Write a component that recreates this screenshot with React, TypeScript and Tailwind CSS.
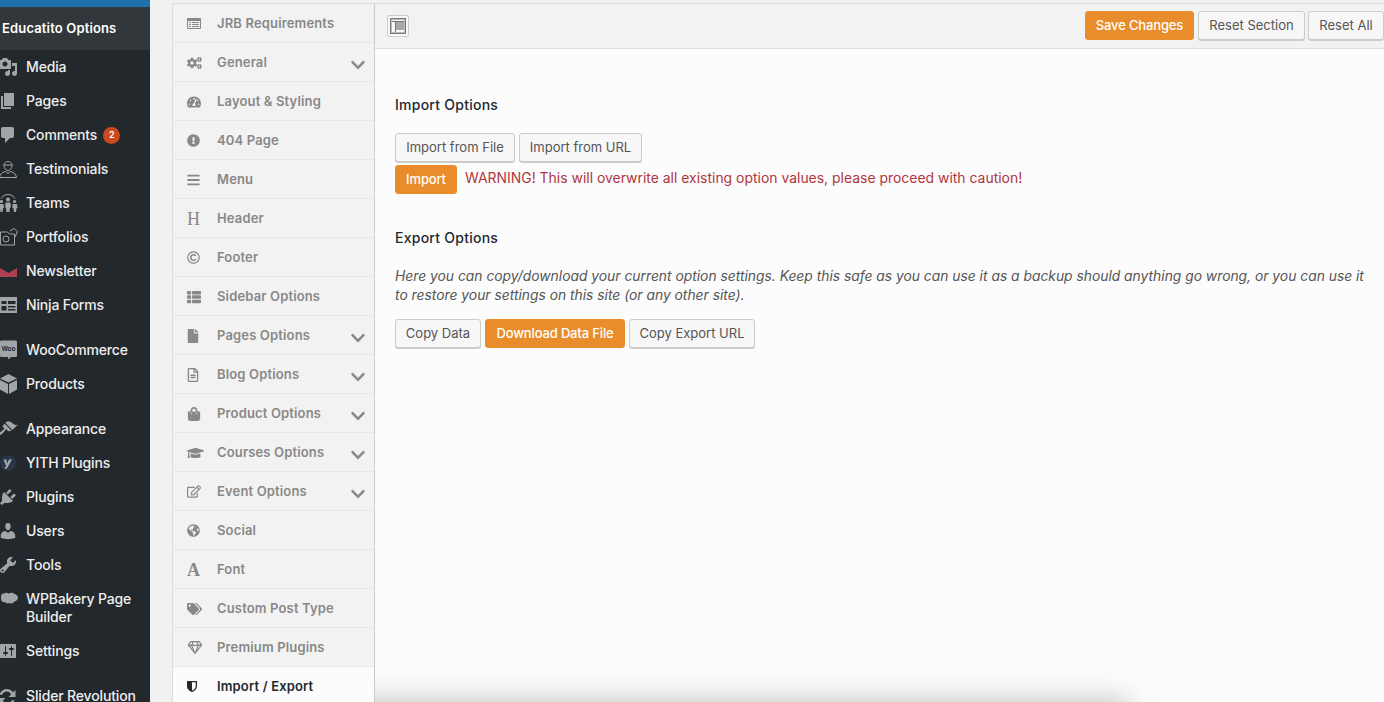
import type { ReactNode } from 'react'
import {
  FaBars,
  FaChevronDown,
  FaCogs,
  FaExclamationCircle,
  FaFile,
  FaGlobeAmericas,
  FaGraduationCap,
  FaRegCopyright,
  FaRegEdit,
  FaRegFileAlt,
  FaRegGem,
  FaShoppingBag,
  FaTachometerAlt,
  FaTags,
  FaThList,
} from 'react-icons/fa'

const font = 'font-["Inter","Liberation_Sans",sans-serif]'

const Dash = ({ d, className = '' }: { d: string; className?: string }) => (
  <svg viewBox="0 0 20 20" className={`h-5 w-5 fill-[#a0a5aa] ${className}`}>
    <path d={d} />
  </svg>
)

const Draw = ({ children }: { children: ReactNode }) => (
  <svg viewBox="0 0 20 20" className="h-5 w-5 fill-[#a0a5aa]">
    {children}
  </svg>
)

const outline = 'none'

const wpMenu: { label: string; icon: ReactNode; badge?: string; gap?: boolean; tall?: boolean }[] = [
  { label: 'Media', icon: <Dash d="M13 11V4c0-.55-.45-1-1-1h-1.67L9 1H5L3.67 3H2c-.55 0-1 .45-1 1v7c0 .55.45 1 1 1h10c.55 0 1-.45 1-1zM7 4.500c1.380 0 2.500 1.120 2.500 2.500S8.380 9.500 7 9.500 4.500 8.380 4.500 7 5.620 4.500 7 4.500zM14 6h5v10.500c0 1.380-1.120 2.500-2.500 2.500S14 17.880 14 16.500s1.120-2.500 2.500-2.500c.17 0 .34.02.5.05V9h-3V6zm-4 8.050V13h2v3.500c0 1.380-1.120 2.500-2.500 2.500S7 17.880 7 16.500 8.120 14 9.500 14c.17 0 .34.02.5.05z" /> },
  { label: 'Pages', icon: <Dash d="M6 15V2h10v13H6zm-1 1h8v2H3V5h2v11z" /> },
  { label: 'Comments', badge: '2', icon: <Dash d="M5 2h9c1.100 0 2 .9 2 2v7c0 1.100-.9 2-2 2h-2l-5 5v-5H5c-1.100 0-2-.9-2-2V4c0-1.100.9-2 2-2z" /> },
  {
    label: 'Testimonials',
    icon: (
      <Draw>
        <g fill={outline} stroke="#a0a5aa" strokeWidth="1">
          <path d="M6 6.500c0-2.500 1.800-4 4-4s4 1.500 4 4-1.800 5-4 5-4-2.500-4-5z" />
          <path d="M5.500 6h9M1.500 18.500c.5-3.500 2.800-5.500 6-6l2.500 2 2.500-2c3.200.5 5.500 2.500 6 6z" />
        </g>
      </Draw>
    ),
  },
  {
    label: 'Teams',
    icon: (
      <Draw>
        <circle cx="10" cy="6.500" r="2" />
        <circle cx="3.500" cy="8.500" r="1.600" />
        <circle cx="16.500" cy="8.500" r="1.600" />
        <path d="M7.500 9.500h5l.5 5h-1l-.5 4.500h-3L8 14.500H7zM1 11h4.500l.5 4-1 .5-.5 3.500h-2l-.5-3.500-1-.5zM14.500 11H19l.5 4-1 .5-.5 3.500h-2l-.5-3.500-1-.5z" />
        <path d="M3 5.500C4 2.500 7 1 10 1s6 1.500 7 4.500l-.7.3C15.300 3.200 12.800 2 10 2S4.700 3.200 3.700 5.800z" />
      </Draw>
    ),
  },
  {
    label: 'Portfolios',
    icon: (
      <Draw>
        <g fill={outline} stroke="#a0a5aa" strokeWidth="1">
          <path d="M2.500 5h7l2 2h5v11h-14z" />
          <circle cx="8" cy="12" r="3" />
          <path d="M12 4l4-2.500 3.500 3L17 10" />
        </g>
      </Draw>
    ),
  },
  {
    label: 'Newsletter',
    icon: (
      <svg viewBox="0 0 20 20" className="h-5 w-5 fill-[#b0404f]">
        <path d="M2 7l8.500 5L19 7v9H2z" />
      </svg>
    ),
  },
  {
    label: 'Ninja Forms',
    icon: (
      <svg viewBox="0 0 20 20" className="h-5 w-5 fill-[#a0a5aa]">
        <path d="M2 2h17v16H2zM3.500 6v3h5V6zm6.500 0v3h7.500V6zM3.500 11v4.500h5V11zm6.500 0v1.500h7.500V11zm0 3v1.500h7.500V14z" fillRule="evenodd" />
      </svg>
    ),
  },
  {
    label: 'WooCommerce',
    gap: true,
    icon: (
      <Draw>
        <path d="M3.500 0.500h14c1 0 1.500.6 1.500 1.500v13.500c0 1-.6 1.500-1.500 1.500H13l-2.500 2.500-.5-2.500H3.500C2.600 17 2 16.500 2 15.500V2C2 1 2.600.5 3.500.5z" />
        <text x="10.500" y="11" textAnchor="middle" fontSize="6.500" fontWeight="700" fill="#23282d" fontFamily="Liberation Sans">Woo</text>
      </Draw>
    ),
  },
  {
    label: 'Products',
    icon: (
      <Draw>
        <path d="M10.500 0l8.500 4.500-8.500 4-8.500-4zM2 6l8 4v10l-8-4.500zM19 6v9.500L11 20V10z" />
      </Draw>
    ),
  },
  { label: 'Appearance', gap: true, icon: <Dash d="M14.480 11.060L7.410 3.990l1.500-1.500c.5-.56 2.300-.47 3.510.32 1.210.8 1.430 1.280 2.910 2.100 1.180.64 2.450 1.260 4.450.85zm-.71.71L6.700 4.700 4.930 6.470c-.39.39-.39 1.020 0 1.410l1.060 1.060c.39.39.39 1.030 0 1.420-.6.6-1.430 1.110-2.210 1.690-.35.26-.7.53-1.010.84C1.430 13.230.4 14.910 1.200 15.700c.79.8 2.470-.23 3.830-1.590.31-.31.58-.66.84-1.010.58-.78 1.090-1.610 1.690-2.210.39-.39 1.020-.39 1.410 0l1.060 1.060c.39.39 1.020.39 1.410 0z" /> },
  {
    label: 'YITH Plugins',
    icon: (
      <svg viewBox="0 0 20 20" className="h-5 w-5">
        <circle cx="10" cy="10" r="8" fill="#2a3648" />
        <path d="M5.500 6.500h3l.5 4 2-4h3l-4.500 8c-.6 1.200-1.800 1.500-3 1.200l.4-1.700c.7.2 1.100 0 1.400-.6z" fill="#a0a5aa" />
      </svg>
    ),
  },
  { label: 'Plugins', icon: <Dash d="M13.110 4.360L9.870 7.600 8 5.730l3.240-3.240c.35-.34 1.050-.2 1.560.32.52.51.66 1.210.31 1.550zm-8 1.770l.91-1.120 9.010 9.010-1.190.84c-.71.71-2.630 1.160-3.820 1.160H6.140L4.900 17.260c-.59.59-1.540.59-2.120 0-.59-.58-.59-1.530 0-2.120l1.240-1.240v-3.880c0-1.130.4-3.190 1.090-3.890zm7.260 3.970l3.240-3.240c.34-.35 1.040-.21 1.550.31.52.51.66 1.210.31 1.550l-3.240 3.250z" /> },
  { label: 'Users', icon: <Dash d="M10 9.250c-2.270 0-2.730-3.440-2.730-3.440C7 4.020 7.820 2 9.970 2c2.160 0 2.980 2.020 2.710 3.810 0 0-.41 3.440-2.680 3.440zm0 2.570L12.720 10c2.390 0 4.520 2.330 4.520 4.530v2.490s-3.650 1.130-7.240 1.130c-3.650 0-7.240-1.130-7.240-1.130v-2.490c0-2.250 1.940-4.480 4.470-4.480z" /> },
  { label: 'Tools', icon: <Dash d="M16.680 9.770c-1.340 1.340-3.300 1.670-4.950.99l-5.410 6.520c-.99.99-2.590.99-3.580 0s-.99-2.590 0-3.570l6.520-5.420c-.68-1.650-.35-3.610.99-4.950 1.280-1.280 3.120-1.620 4.720-1.060l-2.890 2.890 2.820 2.820 2.860-2.870c.53 1.580.18 3.390-1.080 4.650zM3.810 16.210c.4.39 1.040.39 1.430 0 .4-.4.4-1.040 0-1.430-.39-.4-1.030-.4-1.430 0-.39.39-.39 1.030 0 1.430z" /> },
  {
    label: 'WPBakery Page Builder',
    tall: true,
    icon: (
      <Draw>
        <path d="M6 3.500c1.500-1 3.500-.8 4.500 0 2-1.200 4.500-1 6 .5 1 .2 3.500 1.500 3.500 3.500s-1.500 3.500-3.500 4c-1 1.500-3 2.500-5 1.500-1.500.8-3.500.3-4.500-.8-2.500.2-4-1-4-4.200S3.500 3.500 6 3.500z" />
      </Draw>
    ),
  },
  { label: 'Settings', icon: <Dash d="M18 16V4c0-.55-.45-1-1-1H3c-.55 0-1 .45-1 1v12c0 .55.45 1 1 1h14c.55 0 1-.45 1-1zM8 11h1c.55 0 1 .45 1 1s-.45 1-1 1H8v1.500c0 .28-.22.5-.5.5s-.5-.22-.5-.5V13H6c-.55 0-1-.45-1-1s.45-1 1-1h1V5.500c0-.28.22-.5.5-.5s.5.22.5.5V11zm5-2h-1c-.55 0-1-.45-1-1s.45-1 1-1h1V5.500c0-.28.22-.5.5-.5s.5.22.5.5V7h1c.55 0 1 .45 1 1s-.45 1-1 1h-1v5.500c0 .28-.22.5-.5.5s-.5-.22-.5-.5V9z" /> },
  {
    label: 'Slider Revolution',
    gap: true,
    icon: (
      <Draw>
        <path d="M9 3c2.500 0 4.700 1.300 6 3.300L17.500 4v7h-7l2.500-2.500C12.200 6.500 10.800 5.500 9 5.500c-2.300 0-4.300 1.500-5 3.500L1.500 8.500C2.500 5.300 5.500 3 9 3zM.5 12h7L5 14.500c.8 2 2.200 3 4 3 2.300 0 4.300-1.500 5-3.500l2.500.5C15.500 17.700 12.500 20 9 20c-2.500 0-4.700-1.300-6-3.300L.5 19z" />
      </Draw>
    ),
  },
]

const ListCard = () => (
  <svg viewBox="0 0 14 11" className="h-[11px] w-[14px] fill-current">
    <path fillRule="evenodd" d="M1 0h12c.6 0 1 .4 1 1v9c0 .6-.4 1-1 1H1c-.6 0-1-.4-1-1V1c0-.6.4-1 1-1zm0 3v7h12V3zm1 1h2v1H2zm3 0h7v1H5zM2 6h2v1H2zm3 0h7v1H5zM2 8h2v1H2zm3 0h7v1H5z" />
  </svg>
)

const HalfShield = () => (
  <svg viewBox="0 0 10 11" className="h-[11px] w-[10px] fill-current">
    <path fillRule="evenodd" d="M0 0h10v5.500C10 8.500 7 10.200 5 11 3 10.200 0 8.500 0 5.500zM5 1.300v8.300c1.600-.8 3.700-2 3.700-4.100V1.300z" />
  </svg>
)

const sections: { label: string; icon: ReactNode; more?: boolean; active?: boolean }[] = [
  { label: 'JRB Requirements', icon: <ListCard /> },
  { label: 'General', more: true, icon: <FaCogs className="h-[14px] w-[15px]" /> },
  { label: 'Layout & Styling', icon: <FaTachometerAlt className="h-[14px] w-[14px]" /> },
  { label: '404 Page', icon: <FaExclamationCircle className="h-[13px] w-[13px]" /> },
  { label: 'Menu', icon: <FaBars className="h-[14px] w-[13px]" /> },
  { label: 'Header', icon: <span className='font-["Liberation_Serif",serif] text-[18px] leading-[14px] font-normal'>H</span> },
  { label: 'Footer', icon: <FaRegCopyright className="h-[13px] w-[13px]" /> },
  { label: 'Sidebar Options', icon: <FaThList className="h-[14px] w-[14px]" /> },
  { label: 'Pages Options', more: true, icon: <FaFile className="h-[14px] w-[12px]" /> },
  { label: 'Blog Options', more: true, icon: <FaRegFileAlt className="h-[14px] w-[12px]" /> },
  { label: 'Product Options', more: true, icon: <FaShoppingBag className="h-[14px] w-[14px]" /> },
  { label: 'Courses Options', more: true, icon: <FaGraduationCap className="h-[14px] w-[17px]" /> },
  { label: 'Event Options', more: true, icon: <FaRegEdit className="h-[13px] w-[14px]" /> },
  { label: 'Social', icon: <FaGlobeAmericas className="h-[13px] w-[13px]" /> },
  { label: 'Font', icon: <span className='font-["Liberation_Serif",serif] text-[18px] leading-[14px] font-bold'>A</span> },
  { label: 'Custom Post Type', icon: <FaTags className="h-[14px] w-[15px]" /> },
  { label: 'Premium Plugins', icon: <FaRegGem className="h-[13px] w-[16px]" /> },
  { label: 'Import / Export', active: true, icon: <HalfShield /> },
]

const Btn = ({ children, primary, className = '' }: { children: ReactNode; primary?: boolean; className?: string }) => (
  <button
    className={`h-[29px] rounded-[3px] border text-[13px] ${
      primary
        ? 'border-[#e98d2c] bg-[#e98d2c] font-medium tracking-[-0.15px] text-white'
        : 'border-[#ccc] bg-[#f7f7f7] text-[#555] shadow-[0_1px_0_#ccc]'
    } ${className}`}
  >
    {children}
  </button>
)

export default function App() {
  return (
    <div className={`flex h-[702px] w-[1384px] overflow-hidden bg-[#f1f1f1] ${font}`}>
      {/* wp admin menu */}
      <div className="w-[150px] shrink-0 bg-[#23282d]">
        <div className="h-[7px] bg-[#1f6fa8]" />
        <div className="flex h-[43px] items-center bg-[#32373c] pl-[2px] text-[13px] font-semibold tracking-[0.15px] text-white">
          Educatito Options
        </div>
        <ul>
          {wpMenu.map((m) => (
            <li
              key={m.label}
              className={`flex text-[14px] font-medium leading-[18px] tracking-[-0.15px] text-[#eee] ${m.tall ? 'h-[52px] items-start pt-[8px]' : 'h-[34px] items-center'} ${m.gap ? 'mt-[11px]' : ''}`}
            >
              <span className="mr-2 -ml-0.5 flex shrink-0">{m.icon}</span>
              <span className="whitespace-nowrap">
                {m.tall ? (
                  <>
                    WPBakery Page
                    <br />
                    Builder
                  </>
                ) : (
                  m.label
                )}
              </span>
              {m.badge && (
                <span className="ml-[6px] flex h-[17px] w-[17px] items-center justify-center rounded-full bg-[#ca4a1f] text-[9px] font-semibold text-white">
                  {m.badge}
                </span>
              )}
            </li>
          ))}
        </ul>
      </div>

      {/* options panel */}
      <div className="ml-[22px] flex min-w-0 flex-1 flex-col pt-[3px]">
        <div className="flex flex-1 border-t border-[#ddd]">
          <ul className="w-[203px] shrink-0 border-x border-l-[#ddd] border-r-[#ccc] bg-[#f2f2f2]">
            {sections.map((s) => (
              <li
                key={s.label}
                className={`flex h-[39px] items-center border-b border-[#e7e7e7] pt-[1px] text-[13px] font-semibold tracking-[0.15px] ${
                  s.active ? 'bg-[#fcfcfc] text-[#23282d]' : 'text-[#888]'
                }`}
              >
                <span className="flex w-[44px] shrink-0 pl-[14px]">{s.icon}</span>
                <span className="flex-1 whitespace-nowrap">{s.label}</span>
                {s.more && <FaChevronDown className="mt-[4px] mr-[9px] h-[16px] w-[14px]" />}
              </li>
            ))}
          </ul>

          <div className="relative flex min-w-0 flex-1 flex-col overflow-hidden bg-[#fcfcfc]">
            <div className="flex h-[45px] shrink-0 items-center border-b border-[#ddd] bg-[#f2f2f2] pb-[1px] pl-3">
              <button className="flex h-[22px] w-[22px] items-center justify-center rounded-[2px] border border-[#ccc] bg-[#f7f7f7]">
                <svg viewBox="0 0 16 16" className="h-4 w-4">
                  <rect x="0.500" y="0.500" width="15" height="15" fill="none" stroke="#777" />
                  <rect x="1.500" y="1.500" width="13" height="13" fill="none" stroke="#bbb" />
                  <path d="M2 3.500h12" stroke="#777" />
                  <path d="M5.500 4v10" stroke="#777" />
                  <rect x="6" y="4" width="8" height="8" fill="#a9a9a9" />
                </svg>
              </button>
              <div className="ml-auto flex gap-[3px]">
                <Btn primary className="mr-[1px] w-[109px]">Save Changes</Btn>
                <Btn className="w-[107px]">Reset Section</Btn>
                <Btn className="w-[76px]">Reset All</Btn>
              </div>
            </div>

            <div className="pl-[20px] pt-[46px] pr-[12px] text-[13px]">
              <h2 className="text-[14px] font-medium leading-5 tracking-[0.25px] text-[#23282d]">Import Options</h2>
              <div className="mt-[18px] flex gap-1">
                <Btn className="w-[120px]">Import from File</Btn>
                <Btn className="w-[123px]">Import from URL</Btn>
              </div>
              <div className="mt-[3px] flex items-center gap-2">
                <Btn primary className="w-[62px]">Import</Btn>
                <span className="pb-[2px] text-[13.95px] text-[#b0363f]">
                  WARNING! This will overwrite all existing option values, please proceed with caution!
                </span>
              </div>

              <h2 className="mt-[34px] text-[14px] font-medium leading-5 tracking-[0.25px] text-[#23282d]">Export Options</h2>
              <p className="mt-[19px] text-[13.84px] leading-[19px] text-[#555] italic">
                Here you can copy/download your current option settings. Keep this safe as you can use it as a backup should anything go wrong, or you can use it to restore your settings on this site (or any other site).
              </p>
              <div className="mt-[14px] flex gap-1">
                <Btn className="w-[86px]">Copy Data</Btn>
                <Btn primary className="w-[140px]">Download Data File</Btn>
                <Btn className="w-[126px]">Copy Export URL</Btn>
              </div>
            </div>

            {/* shadow of the footer bar sitting below the fold */}
            <div className="absolute top-[698px] -left-10 h-10 w-[794px] shadow-[0_0_30px_rgba(0,0,0,0.25)]" />
          </div>
        </div>
      </div>
    </div>
  )
}
